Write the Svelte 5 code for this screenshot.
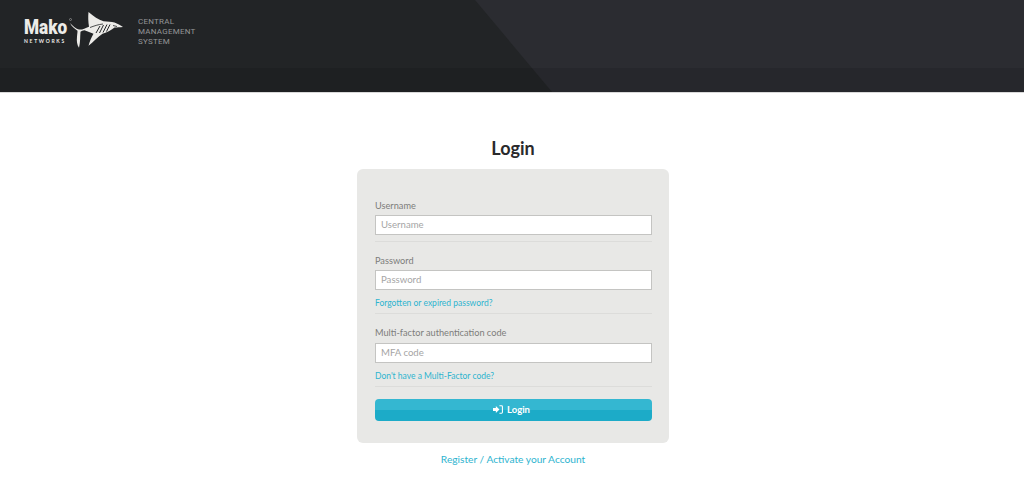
<script>
  const fields = [
    { label: 'Username', placeholder: 'Username', type: 'text' },
    { label: 'Password', placeholder: 'Password', type: 'password', link: 'Forgotten or expired password?' },
    { label: 'Multi-factor authentication code', placeholder: 'MFA code', type: 'text', link: "Don't have a Multi-Factor code?" }
  ];
</script>

<header class="top">
  <div class="brand">
    <div class="logo">
      <div class="wordmark">
        <span class="mako">Mako</span>
        <span class="networks">NETWORKS</span>
      </div>
      <svg class="shark" viewBox="68 10 58 42" width="58" height="42" aria-hidden="true">
        <circle cx="70.5" cy="19.5" r="1" fill="none" stroke="#aaa" stroke-width="0.6" />
        <path fill="#ecebe8" d="M70 23c3 3 6 6 9 6.500 3 .4 6-1 10-2.800-.8-5-1-10-.5-14.700 5 4.500 10 7.500 15 9.300 4 .4 8 .2 11 1.200 3 1 6 2.800 8.500 4.500-3 .5-6 .3-8.500.5-3 2.500-7 5-12 6.200-5 3.500-9 8-14 12 1-4 3-8.500 5-12-3-1-6-2.500-9-3.500-1.500.3-3 .5-4 1.500-.5 5 0 9.500-1.500 16-2-3-2.500-6.500-2-11 .2-2.500.5-4 .5-6-2.500-2-6-4-7.500-7.700z" />
        <path fill="none" stroke="#222426" stroke-width="1" d="M96 33l4-7M99.500 33l4-8M103 32.500l4-8M106.500 31.500l3.500-7" />
        <path fill="none" stroke="#222426" stroke-width="0.8" d="M90 27.500c4-1.500 8-3 13-3.500M113 25.500l4 1" />
      </svg>
    </div>
    <div class="system">CENTRAL<br />MANAGEMENT<br />SYSTEM</div>
  </div>
</header>

<main class="page">
  <h1>Login</h1>
  <form class="card" on:submit|preventDefault>
    {#each fields as f}
      <div class="group" class:has-link={f.link}>
        <label for={f.placeholder}>{f.label}</label>
        <input id={f.placeholder} type={f.type} placeholder={f.placeholder} />
        {#if f.link}
          <a href="#top" class="small">{f.link}</a>
        {/if}
      </div>
    {/each}
    <button type="submit">
      <svg viewBox="0 0 14 12" width="10" height="9" aria-hidden="true">
        <path fill="#fff" d="M0 4h4V1l5 5-5 5V8H0z" />
        <path fill="none" stroke="#fff" stroke-width="1.500" d="M9 .8h3c.8 0 1.200.5 1.200 1.200v8c0 .8-.5 1.200-1.200 1.200H9" />
      </svg>
      Login
    </button>
  </form>
  <a href="#top" class="register">Register / Activate your Account</a>
</main>

<style>
  :global(body) {
    margin: 0;
    background: #fff;
    font-family: "Lato", "Liberation Sans", sans-serif;
  }
  .top {
    position: relative;
    height: 92px;
    background: #2b2c31;
    border-bottom: 1px solid #d9d9d9;
    overflow: hidden;
  }
  .top::before {
    content: '';
    position: absolute;
    inset: 0;
    background: #222426;
    clip-path: polygon(0 0, 475px 0, 552px 100%, 0 100%);
  }
  .top::after {
    content: '';
    position: absolute;
    left: 0;
    right: 0;
    bottom: 0;
    height: 24px;
    background: rgba(0, 0, 0, 0.1);
  }
  .brand {
    position: relative;
    z-index: 1;
    display: flex;
    align-items: flex-start;
    padding: 10px 0 0 24px;
    gap: 12px;
  }
  .logo {
    display: flex;
    align-items: flex-start;
  }
  .wordmark {
    display: flex;
    flex-direction: column;
    padding-top: 7px;
    width: 44px;
    color: #ecebe8;
  }
  .mako {
    font-family: "Roboto", sans-serif;
    font-size: 20px;
    line-height: 20px;
    font-weight: 900;
    transform: scaleX(0.86);
    transform-origin: left;
  }
  .networks {
    margin-top: 1px;
    font-size: 5px;
    line-height: 7px;
    font-weight: 700;
    letter-spacing: 1.7px;
  }
  .shark {
    display: block;
    flex: none;
  }
  .system {
    padding-top: 7px;
    font-family: "Roboto", sans-serif;
    font-size: 8px;
    line-height: 10px;
    letter-spacing: 0.25px;
    color: #949597;
  }
  .page {
    display: flex;
    flex-direction: column;
    align-items: center;
    padding-left: 2px;
  }
  h1 {
    margin: 44px 0 10px;
    font-size: 18px;
    line-height: 22px;
    font-weight: 700;
    color: #2a2a2c;
  }
  .card {
    box-sizing: border-box;
    width: 312px;
    padding: 30px 17px 22px 18px;
    display: flex;
    flex-direction: column;
    background: #e8e8e6;
    border-radius: 6px;
  }
  .group {
    display: flex;
    flex-direction: column;
    padding-bottom: 6px;
    margin-bottom: 12px;
    border-bottom: 1px solid #dcdcda;
  }
  .group.has-link {
    padding-bottom: 4px;
  }
  label {
    padding-top: 1px;
    font-size: 9.200px;
    line-height: 12px;
    color: #7d7d7b;
    margin-bottom: 3px;
  }
  .group:nth-child(3) label {
    margin-bottom: 4px;
  }
  input {
    box-sizing: border-box;
    width: 100%;
    height: 20px;
    padding: 0 5px 1px;
    border: 1px solid #c4c4c2;
    border-radius: 0;
    background: #fff;
    font: 9.600px "Lato", sans-serif;
    outline: none;
  }
  input::placeholder {
    color: #a5a5a5;
    opacity: 1;
  }
  .small {
    margin-top: 7px;
    font-size: 8.500px;
    line-height: 12px;
    color: #2eb4cf;
    text-decoration: none;
  }
  button {
    height: 22px;
    display: flex;
    align-items: center;
    justify-content: center;
    gap: 4px;
    padding: 0 4px 1px 0;
    border: none;
    border-radius: 4px;
    background: linear-gradient(#34b7d1 50%, #1cabc8 50%);
    color: #fff;
    font: 700 9.500px "Lato", sans-serif;
    cursor: pointer;
  }
  .register {
    margin-top: 9px;
    font-size: 10.200px;
    line-height: 14px;
    color: #2eb4cf;
    text-decoration: none;
  }
</style>
